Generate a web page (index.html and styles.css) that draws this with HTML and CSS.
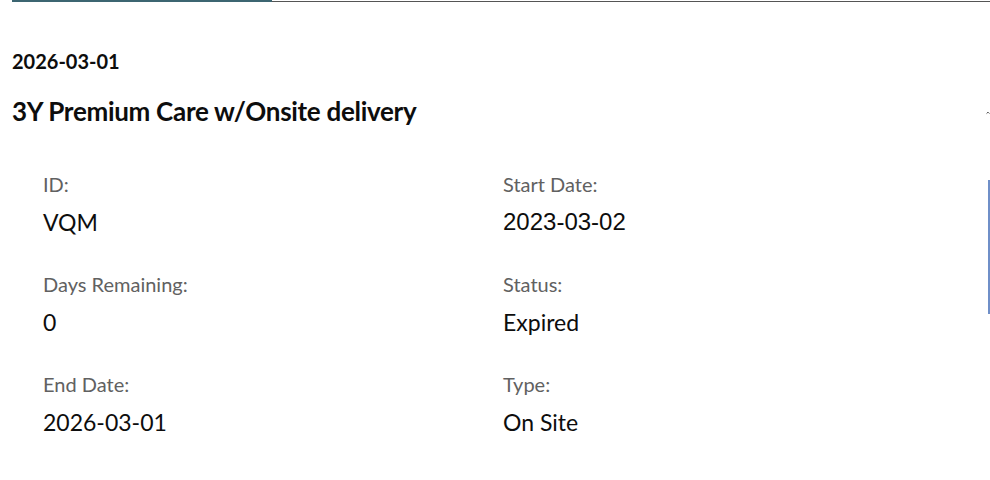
FILE: index.html
```html
<!DOCTYPE html>
<html>
  <head>
    <meta charset="UTF-8">
    <title>Warranty</title>
    <link rel="stylesheet" href="styles.css">
  </head>
  <body>
    <div class="tabs">
      <div class="tab active"></div>
      <div class="tab-rest"></div>
    </div>
    <div class="card">
      <p class="date">2026-03-01</p>
      <div class="card-head">
        <h2 class="title">3Y Premium Care w/Onsite delivery</h2>
        <span class="toggle">
          <svg width="14" height="14" viewBox="0 0 14 14"><path d="M2 9 L7 4 L12 9" fill="none" stroke="#000" stroke-width="2.4"/></svg>
        </span>
      </div>
      <div class="card-body">
        <div class="details">
          <div class="field">
            <p class="label">ID:</p>
            <p class="value">VQM</p>
          </div>
          <div class="field">
            <p class="label">Start Date:</p>
            <p class="value alt">2023-03-02</p>
          </div>
          <div class="field">
            <p class="label">Days Remaining:</p>
            <p class="value">0</p>
          </div>
          <div class="field">
            <p class="label">Status:</p>
            <p class="value">Expired</p>
          </div>
          <div class="field">
            <p class="label">End Date:</p>
            <p class="value">2026-03-01</p>
          </div>
          <div class="field">
            <p class="label">Type:</p>
            <p class="value">On Site</p>
          </div>
        </div>
        <div class="edge"></div>
      </div>
    </div>
  </body>
</html>
```

FILE: styles.css
```css
body {
  margin: 0;
  background-color: #fff;
  color: #0d0d0d;
  font-family: 'Lato', 'Noto Sans', sans-serif;
  overflow: hidden;
}
p {
  margin: 0;
}
.tabs {
  display: flex;
  align-items: flex-start;
  height: 2px;
}
.tab.active {
  margin-left: 12px;
  width: 260px;
  height: 2px;
  background-color: #3c6571;
}
.tab-rest {
  flex: 1;
  height: 1px;
  margin-top: 1px;
  background-color: #555;
}
.card {
  padding: 47px 0 0 12px;
}
.date {
  font-size: 20px;
  line-height: 24px;
  font-weight: bold;
}
.card-head {
  display: flex;
  justify-content: space-between;
  align-items: center;
  margin-top: 22px;
}
.title {
  margin: 0;
  font-size: 26px;
  line-height: 32px;
  font-weight: bold;
  letter-spacing: -0.3px;
}
.toggle {
  width: 4px;
  overflow: hidden;
  display: flex;
  margin-top: 4px;
}
.card-body {
  display: flex;
  margin-top: 45px;
}
.details {
  flex: 1;
  display: grid;
  grid-template-columns: 460px 1fr;
  row-gap: 36px;
  padding-left: 31px;
}
.label {
  font-size: 20px;
  line-height: 24px;
  color: #616161;
  margin-bottom: 12px;
}
.value {
  font-size: 23px;
  line-height: 28px;
}
.value.alt {
  font-family: 'Liberation Sans', Arial, sans-serif;
  font-size: 24px;
}
.edge {
  width: 2px;
  height: 134px;
  margin-top: 8px;
  background-color: #6f8fc8;
}
```
